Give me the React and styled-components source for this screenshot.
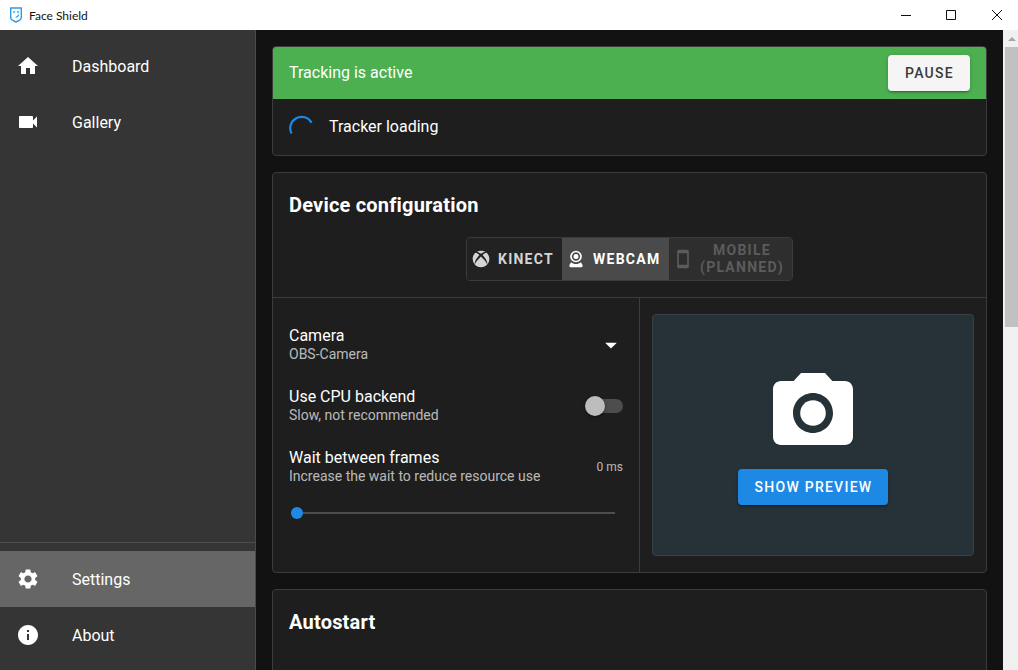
import React from 'react'
import styled, { createGlobalStyle } from 'styled-components'
import { MdHome, MdVideocam, MdSettings, MdInfo, MdPhotoCamera, MdSmartphone, MdArrowDropDown } from 'react-icons/md'

const GlobalStyle = createGlobalStyle`
	html, body {
		margin: 0;
		padding: 0;
		width: 100%;
		height: 100%;
		overflow: hidden;
		background: #121212;
	}
	* {
		box-sizing: border-box;
	}
	#root {
		height: 100%;
	}
`

const Window = styled.div`
	width: 1018px;
	height: 670px;
	display: flex;
	flex-direction: column;
	font-family: Roboto, "Liberation Sans", sans-serif;
	color: #fff;
	overflow: hidden;
`

const TitleBar = styled.div`
	height: 30px;
	flex: none;
	background: #fff;
	display: flex;
	align-items: center;
	padding-left: 10px;
	padding-right: 0;
	color: #111;
	font-family: Lato, "Noto Sans", sans-serif;
	font-size: 12px;
`

const TitleText = styled.span`
	margin-left: 7px;
	flex: 1;
`

const WinButtons = styled.div`
	display: flex;
	margin-right: -2px;
`

const WinButton = styled.div`
	width: 46px;
	height: 30px;
	display: flex;
	align-items: center;
	justify-content: center;
`

const MinButton = styled(WinButton)`
	margin-right: -1px;
`

const Body = styled.div`
	flex: 1;
	display: flex;
	min-height: 0;
`

const Sidebar = styled.nav`
	width: 256px;
	flex: none;
	background: #353535;
	border-right: 1px solid #4a4a4a;
	display: flex;
	flex-direction: column;
	padding-top: 8px;
`

const NavGroup = styled.div`
	display: flex;
	flex-direction: column;
`

const NavBottom = styled(NavGroup)`
	margin-top: auto;
	border-top: 1px solid #4f4f4f;
	padding-top: 8px;
	padding-bottom: 7px;
`

const NavItem = styled.div`
	height: 56px;
	display: flex;
	align-items: center;
	padding-left: 16px;
	font-size: 16px;
	color: #fff;
	background: ${p => (p.$active ? '#666666' : 'transparent')};

	svg {
		flex: none;
		width: 24px;
		height: 24px;
		margin-right: 32px;
	}
`

const Main = styled.main`
	flex: 1;
	min-width: 0;
	background: #121212;
	padding: 16px 16px 0;
	display: flex;
	flex-direction: column;
	gap: 16px;
	overflow: hidden;
`

const Card = styled.section`
	flex: none;
	background: #1e1e1e;
	border: 1px solid #3b3b3b;
	border-radius: 4px;
	overflow: hidden;
`

const StatusBar = styled.div`
	height: 52px;
	background: #4caf50;
	display: flex;
	align-items: center;
	justify-content: space-between;
	padding: 0 16px;
	font-size: 16px;
`

const StatusLabel = styled.span`
	padding-bottom: 2px;
`

const PauseButton = styled.button`
	width: 82px;
	height: 36px;
	border: 0;
	border-radius: 4px;
	background: #f5f5f5;
	color: #3a3a3a;
	font-family: inherit;
	font-size: 14px;
	font-weight: 500;
	letter-spacing: 1.25px;
	text-indent: 1px;
	box-shadow: 0 3px 1px -2px rgba(0, 0, 0, .2), 0 2px 2px 0 rgba(0, 0, 0, .14), 0 1px 5px 0 rgba(0, 0, 0, .12);
`

const LoadingRow = styled.div`
	height: 56px;
	display: flex;
	align-items: center;
	padding-left: 16px;
	gap: 16px;
	font-size: 16px;
`

const CardTitle = styled.h2`
	margin: 0;
	padding: 20px 16px 0;
	font-size: 20px;
	line-height: 24px;
	font-weight: 700;
	letter-spacing: .2px;
`

const ToggleRow = styled.div`
	display: flex;
	justify-content: center;
	padding: 20px 0 16px;
	border-bottom: 1px solid #3b3b3b;
`

const ToggleGroup = styled.div`
	display: flex;
	height: 44px;
	border: 1px solid #3b3b3b;
	border-radius: 4px;
	overflow: hidden;
`

const Toggle = styled.div`
	width: ${p => p.$width}px;
	display: flex;
	align-items: center;
	gap: 7px;
	padding: 0 9px 0 4px;
	font-size: 14px;
	line-height: 17px;
	font-weight: 700;
	letter-spacing: 1.25px;
	text-align: center;
	color: ${p => (p.$disabled ? '#5c5c5c' : p.$active ? '#fff' : '#d4d4d4')};
	background: ${p => (p.$active ? '#4a4a4a' : p.$disabled ? '#2e2e2e' : '#222222')};

	svg {
		flex: none;
		width: 20px;
		height: 20px;
	}
`

const ToggleLabel = styled.span`
	flex: 1;
`

const Columns = styled.div`
	display: flex;
	height: 274px;
`

const FormColumn = styled.div`
	width: 367px;
	flex: none;
	border-right: 1px solid #3b3b3b;
	padding: 28px 16px 0;
	display: flex;
	flex-direction: column;
`

const Setting = styled.div`
	height: 61px;
	display: flex;
	align-items: flex-start;
	justify-content: space-between;
`

const SettingText = styled.div`
	display: flex;
	flex-direction: column;
`

const SettingName = styled.span`
	font-size: 16px;
	line-height: 20px;
`

const SettingHint = styled.span`
	font-size: 14px;
	line-height: 17px;
	color: rgba(255, 255, 255, .7);
`

const CaretSlot = styled.div`
	width: 28px;
	height: 24px;
	margin-top: 7px;
	margin-right: -2px;
	display: flex;
	align-items: center;
	justify-content: center;

	svg {
		width: 28px;
		height: 28px;
	}
`

const Switch = styled.div`
	position: relative;
	width: 28px;
	height: 14px;
	margin: 12px 0 0;
	border-radius: 7px;
	background: #4d4d4d;
`

const SwitchThumb = styled.div`
	position: absolute;
	left: -10px;
	top: -3px;
	width: 20px;
	height: 20px;
	border-radius: 50%;
	background: #bdbdbd;
	box-shadow: 0 1px 3px rgba(0, 0, 0, .5);
`

const WaitValue = styled.span`
	font-size: 12px;
	line-height: 16px;
	margin-top: 11px;
	color: rgba(255, 255, 255, .7);
`

const Slider = styled.div`
	position: relative;
	height: 2px;
	width: 324px;
	margin: 3px 0 0 2px;
	background: #4d4d4d;
`

const SliderThumb = styled.div`
	position: absolute;
	left: 0;
	top: -5px;
	width: 12px;
	height: 12px;
	border-radius: 50%;
	background: #1e88e5;
`

const PreviewColumn = styled.div`
	flex: 1;
	padding: 16px 12px;
`

const Preview = styled.div`
	height: 100%;
	background: #263238;
	border: 1px solid #37424a;
	border-radius: 4px;
	display: flex;
	flex-direction: column;
	align-items: center;
	padding-top: 50px;
`

const PreviewButton = styled.button`
	width: 150px;
	height: 36px;
	margin-top: 8px;
	border: 0;
	border-radius: 4px;
	background: #1e88e5;
	color: #fff;
	font-family: inherit;
	font-size: 14px;
	font-weight: 500;
	letter-spacing: 1.25px;
	text-indent: 1px;
	box-shadow: 0 3px 1px -2px rgba(0, 0, 0, .2), 0 2px 2px 0 rgba(0, 0, 0, .14), 0 1px 5px 0 rgba(0, 0, 0, .12);
`

const AutostartCard = styled(Card)`
	height: 120px;
`

const Scrollbar = styled.div`
	width: 15px;
	flex: none;
	background: #f0f0f0;
	display: flex;
	flex-direction: column;
	align-items: flex-end;
`

const ScrollArrow = styled.div`
	width: 13px;
	height: 17px;
	display: flex;
	align-items: center;
	justify-content: center;

	&::before {
		content: '';
		border-left: 4px solid transparent;
		border-right: 4px solid transparent;
		border-bottom: 4px solid #a6a6a6;
	}
`

const ScrollThumb = styled.div`
	width: 13px;
	height: 280px;
	background: #c1c1c1;
`

const ShieldLogo = () => (
	<svg width="12" height="16" viewBox="0 0 12 16" fill="none">
		<path d="M.7 1h10.6v9.6c0 1.8-2.7 3.4-5.3 4.4-2.6-1-5.3-2.6-5.3-4.4z" stroke="#2f9be8" strokeWidth="1.4" />
		<circle cx="4" cy="5" r=".9" fill="#2f9be8" />
		<circle cx="8" cy="5" r=".9" fill="#2f9be8" />
		<path d="M8.4 7.6c0 1.6-1.1 2.6-2.8 2.6" stroke="#2f9be8" strokeWidth="1.1" />
	</svg>
)

const XboxIcon = () => (
	<svg viewBox="0 0 24 24" fill="currentColor">
		<path d="M6.43,3.72C6.5,3.66 6.57,3.6 6.62,3.56C8.18,2.55 10,2 12,2C13.88,2 15.64,2.5 17.14,3.42C17.25,3.5 17.54,3.69 17.7,3.88C16.25,2.28 12,5.7 12,5.7C10.5,4.57 9.17,3.8 8.16,3.5C7.31,3.29 6.73,3.5 6.46,3.7M19.34,5.21C19.29,5.16 19.24,5.11 19.2,5.06C18.84,4.66 18.38,4.56 18,4.59C17.61,4.71 15.9,5.32 13.8,7.31C13.8,7.31 16.17,9.61 17.62,11.96C19.07,14.31 19.93,16.16 19.4,18.73C21,16.95 22,14.59 22,12C22,9.38 21,7 19.34,5.21M15.73,12.96C15.08,12.24 14.13,11.21 12.86,9.95C12.59,9.68 12.3,9.4 12,9.1C12,9.1 11.53,9.56 10.93,10.17C10.16,10.94 9.17,11.95 8.61,12.54C7.63,13.59 4.81,16.89 4.65,18.74C4.65,18.74 4,17.28 5.4,13.89C6.3,11.68 9,8.36 10.15,7.28C10.15,7.28 9.12,6.14 7.82,5.35L7.77,5.32C7.14,4.95 6.46,4.66 5.8,4.62C5.13,4.67 4.71,5.16 4.71,5.16C3.03,6.95 2,9.35 2,12A10,10 0 0,0 12,22C14.93,22 17.57,20.74 19.4,18.73C19.4,18.73 19.19,17.4 17.84,15.5C17.53,15.07 16.37,13.69 15.73,12.96Z" />
	</svg>
)

const WebcamIcon = () => (
	<svg viewBox="0 0 24 24" fill="currentColor">
		<path d="M12,2A7,7 0 0,1 19,9A7,7 0 0,1 12,16A7,7 0 0,1 5,9A7,7 0 0,1 12,2M12,4A5,5 0 0,0 7,9A5,5 0 0,0 12,14A5,5 0 0,0 17,9A5,5 0 0,0 12,4M12,6A3,3 0 0,1 15,9A3,3 0 0,1 12,12A3,3 0 0,1 9,9A3,3 0 0,1 12,6M6,22A2,2 0 0,1 4,20C4,19.62 4.1,19.27 4.29,18.97L6.11,15.81C7.69,17.17 9.75,18 12,18C14.25,18 16.31,17.17 17.89,15.81L19.71,18.97C19.9,19.27 20,19.62 20,20A2,2 0 0,1 18,22H6Z" />
	</svg>
)

const Spinner = () => (
	<svg width="24" height="24" viewBox="0 0 24 24" fill="none">
		<path d="M2.6 18.6A10.8 10.8 0 0 1 22.6 7.8" stroke="#1e88e5" strokeWidth="2.2" />
	</svg>
)

export default function App() {
	return (
		<Window>
			<GlobalStyle />
			<TitleBar>
				<ShieldLogo />
				<TitleText>Face Shield</TitleText>
				<WinButtons>
					<MinButton>
						<svg width="10" height="10" viewBox="0 0 10 10"><path d="M0 5.5h10" stroke="#111" /></svg>
					</MinButton>
					<WinButton>
						<svg width="10" height="10" viewBox="0 0 10 10"><path d="M.5.5h9v9h-9z" stroke="#111" fill="none" /></svg>
					</WinButton>
					<WinButton>
						<svg width="10" height="10" viewBox="0 0 10 10"><path d="M0 0l10 10M10 0L0 10" stroke="#111" /></svg>
					</WinButton>
				</WinButtons>
			</TitleBar>
			<Body>
				<Sidebar>
					<NavGroup>
						<NavItem><MdHome />Dashboard</NavItem>
						<NavItem><MdVideocam />Gallery</NavItem>
					</NavGroup>
					<NavBottom>
						<NavItem $active><MdSettings />Settings</NavItem>
						<NavItem><MdInfo />About</NavItem>
					</NavBottom>
				</Sidebar>
				<Main>
					<Card>
						<StatusBar>
							<StatusLabel>Tracking is active</StatusLabel>
							<PauseButton>PAUSE</PauseButton>
						</StatusBar>
						<LoadingRow>
							<Spinner />
							<StatusLabel>Tracker loading</StatusLabel>
						</LoadingRow>
					</Card>
					<Card>
						<CardTitle>Device configuration</CardTitle>
						<ToggleRow>
							<ToggleGroup>
								<Toggle $width={95}><XboxIcon /><ToggleLabel>KINECT</ToggleLabel></Toggle>
								<Toggle $width={107} $active><WebcamIcon /><ToggleLabel>WEBCAM</ToggleLabel></Toggle>
								<Toggle $width={123} $disabled><MdSmartphone /><ToggleLabel>MOBILE<br />(PLANNED)</ToggleLabel></Toggle>
							</ToggleGroup>
						</ToggleRow>
						<Columns>
							<FormColumn>
								<Setting>
									<SettingText>
										<SettingName>Camera</SettingName>
										<SettingHint>OBS-Camera</SettingHint>
									</SettingText>
									<CaretSlot><MdArrowDropDown /></CaretSlot>
								</Setting>
								<Setting>
									<SettingText>
										<SettingName>Use CPU backend</SettingName>
										<SettingHint>Slow, not recommended</SettingHint>
									</SettingText>
									<Switch><SwitchThumb /></Switch>
								</Setting>
								<Setting>
									<SettingText>
										<SettingName>Wait between frames</SettingName>
										<SettingHint>Increase the wait to reduce resource use</SettingHint>
									</SettingText>
									<WaitValue>0 ms</WaitValue>
								</Setting>
								<Slider><SliderThumb /></Slider>
							</FormColumn>
							<PreviewColumn>
								<Preview>
									<MdPhotoCamera size={96} />
									<PreviewButton>SHOW PREVIEW</PreviewButton>
								</Preview>
							</PreviewColumn>
						</Columns>
					</Card>
					<AutostartCard>
						<CardTitle>Autostart</CardTitle>
					</AutostartCard>
				</Main>
				<Scrollbar>
					<ScrollArrow />
					<ScrollThumb />
				</Scrollbar>
			</Body>
		</Window>
	)
}
